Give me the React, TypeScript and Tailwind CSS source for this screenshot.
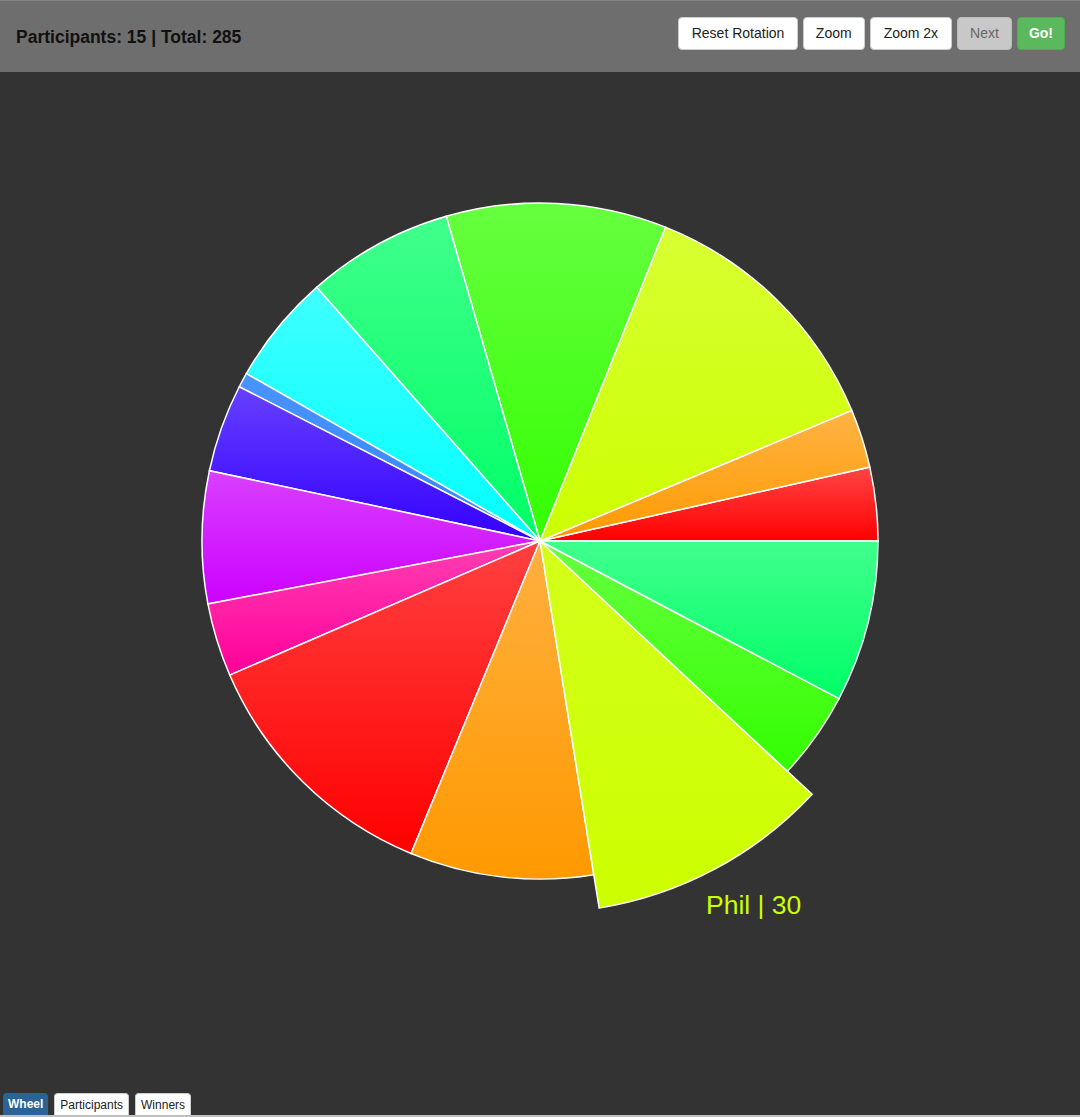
import React from 'react';

type Slice = { name: string; value: number; top: string; bottom: string };

const slices: Slice[] = [
  { name: 'A', value: 10, top: '#ff4545', bottom: '#ff0000' },
  { name: 'B', value: 8, top: '#ffb445', bottom: '#ff9900' },
  { name: 'C', value: 36, top: '#d8ff33', bottom: '#ccff00' },
  { name: 'D', value: 30, top: '#66ff40', bottom: '#33ff00' },
  { name: 'E', value: 20, top: '#40ff8c', bottom: '#00ff66' },
  { name: 'F', value: 15, top: '#40ffff', bottom: '#00ffff' },
  { name: 'G', value: 2, top: '#4a94ff', bottom: '#3385ff' },
  { name: 'H', value: 12, top: '#6640ff', bottom: '#3300ff' },
  { name: 'I', value: 18, top: '#d940ff', bottom: '#cc00ff' },
  { name: 'J', value: 10, top: '#ff40b3', bottom: '#ff0099' },
  { name: 'K', value: 35, top: '#ff4040', bottom: '#ff0000' },
  { name: 'L', value: 25, top: '#ffb040', bottom: '#ff9900' },
  { name: 'Phil', value: 30, top: '#d4ff1a', bottom: '#ccff00' },
  { name: 'N', value: 12, top: '#66ff40', bottom: '#33ff00' },
  { name: 'O', value: 22, top: '#40ff8c', bottom: '#00ff66' },
];

const total = slices.reduce((s, x) => s + x.value, 0);
const CX = 540;
const CY = 469;
const R = 338;

function arcPath(a0: number, a1: number, r: number) {
  // angles in degrees, counterclockwise on screen
  const p = (a: number) => {
    const t = (a * Math.PI) / 180;
    return [CX + r * Math.cos(t), CY - r * Math.sin(t)];
  };
  const [x0, y0] = p(a0);
  const [x1, y1] = p(a1);
  const large = a1 - a0 > 180 ? 1 : 0;
  return `M${CX},${CY} L${x0},${y0} A${r},${r} 0 ${large} 0 ${x1},${y1} Z`;
}

const Wheel: React.FC = () => {
  let acc = 0;
  return (
    <svg width={1080} height={1020} className="block">
      <defs>
        {slices.map((s, i) => (
          <linearGradient key={i} id={`g${i}`} x1="0" y1="0" x2="0" y2="1">
            <stop offset="0%" stopColor={s.top} />
            <stop offset="100%" stopColor={s.bottom} />
          </linearGradient>
        ))}
      </defs>
      {slices.map((s, i) => {
        const a0 = (acc / total) * 360;
        acc += s.value;
        const a1 = (acc / total) * 360;
        const r = s.name === 'Phil' ? R * 1.1 : R;
        return <path key={i} d={arcPath(a0, a1, r)} fill={`url(#g${i})`} stroke="#ffffff" strokeWidth={1.5} />;
      })}
      <text x={706} y={842} fill="#ccff00" fontSize={26.5} fontFamily="'Liberation Sans', Arial, sans-serif">
        Phil | 30
      </text>
    </svg>
  );
};

const App: React.FC = () => {
  return (
    <div className="w-[1080px] h-[1117px] bg-[#333333] flex flex-col overflow-hidden font-['Liberation_Sans',Arial,sans-serif]">
      {/* Header */}
      <header className="h-[72px] bg-[#6e6e6e] border-t border-[#858585] flex items-start justify-between pl-4 pr-[15px]">
        <div className="text-[17.5px] font-bold text-[#111111] pt-[23px]">Participants: 15 | Total: 285</div>
        <div className="flex items-center gap-[5px] pt-[16px]">
          <button className="h-[33px] px-[12.5px] bg-white text-[#222222] text-[14px] rounded border border-[#cccccc]">Reset Rotation</button>
          <button className="h-[33px] px-3 bg-white text-[#222222] text-[14px] rounded border border-[#cccccc]">Zoom</button>
          <button className="h-[33px] px-[13px] bg-white text-[#222222] text-[14px] rounded border border-[#cccccc]">Zoom 2x</button>
          <button className="h-[33px] px-3 bg-[#c8c8c8] text-[#666666] text-[14px] rounded border border-[#bbbbbb]">Next</button>
          <button className="h-[33px] px-[11px] bg-[#5cb85c] text-white font-bold text-[14px] rounded border border-[#4cae4c]">Go!</button>
        </div>
      </header>

      {/* Wheel */}
      <Wheel />

      {/* Tabs */}
      <div className="flex-1 flex items-end gap-[6px] pl-[3px] border-b-2 border-[#c0c0c0]">
        <button className="h-[22px] px-[5px] bg-[#2a6496] text-white font-bold text-[12px] rounded-t-sm">Wheel</button>
        <button className="h-[22px] px-[5px] bg-white text-[#222222] text-[12px] rounded-t-sm border border-[#cccccc] border-b-0">Participants</button>
        <button className="h-[22px] px-[5px] bg-white text-[#222222] text-[12px] rounded-t-sm border border-[#cccccc] border-b-0">Winners</button>
      </div>
    </div>
  );
};

export default App;
